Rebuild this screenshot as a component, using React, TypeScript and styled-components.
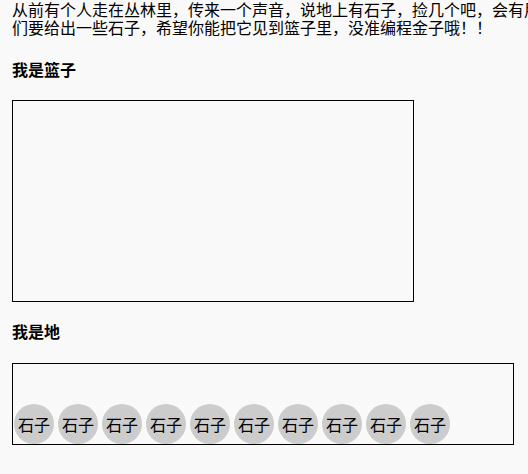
import React from "react";
import styled, { createGlobalStyle } from "styled-components";

const Global = createGlobalStyle`
  html, body {
    margin: 0;
    padding: 0;
    background: #f9f9f9;
    overflow: hidden;
  }
  body {
    font-family: "Noto Sans CJK SC", "Noto Sans", sans-serif;
    font-size: 16px;
    line-height: 18px;
    color: #000;
  }
`;

const Page = styled.div`
  padding: 0 12px;
`;

const Story = styled.p`
  margin: 0;
  width: 576px;
`;

const Title = styled.h4`
  margin: 24px 0 22px;
  font-size: 16px;
  line-height: 18px;
  font-weight: bold;
`;

const SecondTitle = styled(Title)`
  margin: 20px 0 23px;
`;

const Basket = styled.div`
  width: 400px;
  height: 200px;
  border: 1px solid #000;
`;

const Ground = styled.div`
  width: 499px;
  height: 80px;
  border: 1px solid #000;
  padding-left: 1px;
  display: flex;
  align-items: flex-end;
  gap: 4px;
`;

const Stone = styled.div`
  width: 40px;
  height: 40px;
  border-radius: 50%;
  background: #cccccc;
  line-height: 40px;
  text-align: center;
  flex: none;
`;

const stones = Array.from({ length: 10 }, (_, i) => i);

export default function App() {
  return (
    <>
      <Global />
      <Page>
        <Story>
          从前有个人走在丛林里，传来一个声音，说地上有石子，捡几个吧，会有用的，我们要给出一些石子，希望你能把它见到篮子里，没准编程金子哦！！
        </Story>
        <Title>我是篮子</Title>
        <Basket />
        <SecondTitle>我是地</SecondTitle>
        <Ground>
          {stones.map((i) => (
            <Stone key={i}>石子</Stone>
          ))}
        </Ground>
      </Page>
    </>
  );
}
